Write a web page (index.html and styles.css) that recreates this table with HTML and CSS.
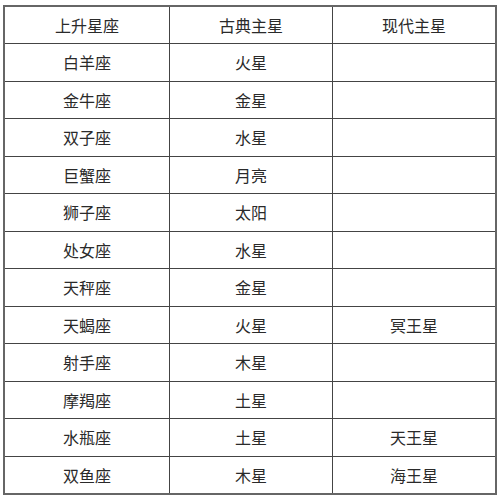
FILE: index.html
```html
<!DOCTYPE html>
<html lang="zh">
<head>
<meta charset="utf-8">
<link rel="stylesheet" href="styles.css">
</head>
<body>
<table class="signs">
<thead>
<tr><th>上升星座</th><th>古典主星</th><th>现代主星</th></tr>
</thead>
<tbody>
<tr><td>白羊座</td><td>火星</td><td></td></tr>
<tr><td>金牛座</td><td>金星</td><td></td></tr>
<tr><td>双子座</td><td>水星</td><td></td></tr>
<tr><td>巨蟹座</td><td>月亮</td><td></td></tr>
<tr><td>狮子座</td><td>太阳</td><td></td></tr>
<tr><td>处女座</td><td>水星</td><td></td></tr>
<tr><td>天秤座</td><td>金星</td><td></td></tr>
<tr><td>天蝎座</td><td>火星</td><td>冥王星</td></tr>
<tr><td>射手座</td><td>木星</td><td></td></tr>
<tr><td>摩羯座</td><td>土星</td><td></td></tr>
<tr><td>水瓶座</td><td>土星</td><td>天王星</td></tr>
<tr><td>双鱼座</td><td>木星</td><td>海王星</td></tr>
</tbody>
</table>
</body>
</html>
```

FILE: styles.css
```css
html, body {
  margin: 0;
  padding: 0;
  background: #fff;
}
.signs {
  margin: 5px 0 0 3px;
  width: 494px;
  border-collapse: collapse;
  border: 2px solid #666;
  table-layout: fixed;
  font-family: "Noto Sans CJK SC", "Noto Sans", sans-serif;
  font-size: 16px;
  color: #2a2a2a;
}
.signs tr {
  height: 37.5px;
}
.signs th, .signs td {
  border: 1px solid #444;
  text-align: center;
  vertical-align: middle;
  padding: 0;
  font-weight: normal;
  line-height: 20px;
}
.signs th:nth-child(1), .signs td:nth-child(1) { width: 164px; }
.signs th:nth-child(2), .signs td:nth-child(2) { width: 162px; }
```
